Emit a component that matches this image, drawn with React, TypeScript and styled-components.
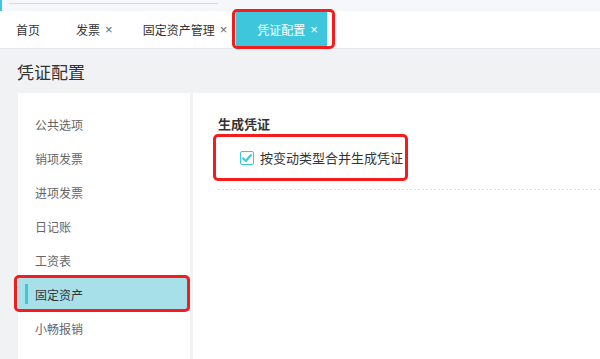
import * as React from 'react';
import styled, { createGlobalStyle } from 'styled-components';

const GlobalStyle = createGlobalStyle`
    html, body {
        margin: 0;
        padding: 0;
        background: #f1f2f4;
        font-family: 'Noto Sans CJK SC', 'Liberation Sans', sans-serif;
        overflow: hidden;
    }
`;

const tabs = [
    { label: '首页', closable: false },
    { label: '发票', closable: true },
    { label: '固定资产管理', closable: true },
    { label: '凭证配置', closable: true, active: true },
];

const menu = ['公共选项', '销项发票', '进项发票', '日记账', '工资表', '固定资产', '小畅报销'];

export default function App() {
    const [activeMenu, setActiveMenu] = React.useState('固定资产');
    const [merge, setMerge] = React.useState(true);

    return (
        <Page>
            <GlobalStyle />
            <TopStrip>
                <StripLine />
            </TopStrip>
            <TabBar>
                {tabs.map(t => {
                    const tab = (
                        <Tab key={t.label} $active={!!t.active} $first={!t.closable}>
                            {t.label}
                            {t.closable && <Close $active={!!t.active}>×</Close>}
                        </Tab>
                    );
                    return t.active ? (
                        <Marked key={t.label} $t={3} $r={8} $b={1} $l={4}>
                            {tab}
                        </Marked>
                    ) : (
                        tab
                    );
                })}
            </TabBar>
            <Title>凭证配置</Title>
            <Main>
                <Sidebar>
                    {menu.map(m =>
                        m === activeMenu ? (
                            <Marked key={m} $t={2} $r={0} $b={1} $l={4}>
                                <MenuItem $active onClick={() => setActiveMenu(m)}>
                                    <ActiveBar />
                                    {m}
                                </MenuItem>
                            </Marked>
                        ) : (
                            <MenuItem key={m} onClick={() => setActiveMenu(m)}>
                                {m}
                            </MenuItem>
                        ),
                    )}
                </Sidebar>
                <Content>
                    <SectionTitle>生成凭证</SectionTitle>
                    <OptionRow>
                        <Marked $t={7} $r={5} $b={7} $l={5}>
                            <Option onClick={() => setMerge(!merge)}>
                                <Checkbox $checked={merge}>
                                    {merge && (
                                        <svg width="12" height="12" viewBox="0 0 12 12">
                                            <path
                                                d="M2 6.2 L4.8 9 L10 3"
                                                fill="none"
                                                stroke="#3ec7dc"
                                                strokeWidth="2"
                                                strokeLinecap="round"
                                                strokeLinejoin="round"
                                            />
                                        </svg>
                                    )}
                                </Checkbox>
                                按变动类型合并生成凭证
                            </Option>
                        </Marked>
                    </OptionRow>
                    <Divider />
                </Content>
            </Main>
        </Page>
    );
}

const Page = styled.div`
    width: 600px;
    height: 359px;
    display: flex;
    flex-direction: column;
    background: #f1f2f4;
`;

const TopStrip = styled.div`
    height: 11px;
    background: #f6f7fb;
    border-left: 2px solid #3ec7dc;
    box-sizing: border-box;
    padding: 3px 0 0 7px;
`;

const StripLine = styled.div`
    width: 209px;
    height: 1px;
    background: #d6d9de;
`;

const TabBar = styled.div`
    height: 38px;
    background: #fff;
    border-bottom: 1px solid #e4e6ea;
    display: flex;
    align-items: stretch;
    padding-top: 1px;
    box-sizing: border-box;
`;

const Tab = styled.div<{ $active: boolean; $first: boolean }>`
    display: flex;
    align-items: center;
    height: 35px;
    padding: ${p => (p.$first ? '0 15px 0 16px' : '0 9px 0 21px')};
    font-size: 12px;
    color: ${p => (p.$active ? '#fff' : '#333')};
    background: ${p => (p.$active ? '#3ec7dc' : 'transparent')};
    cursor: pointer;
    white-space: nowrap;
`;

const Close = styled.span<{ $active: boolean }>`
    margin-left: 5px;
    font-size: 13px;
    line-height: 1;
    color: ${p => (p.$active ? '#fff' : '#666')};
    font-family: 'Liberation Sans', sans-serif;
`;

const Marked = styled.div<{ $t: number; $r: number; $b: number; $l: number }>`
    position: relative;
    display: flex;
    &::after {
        content: '';
        position: absolute;
        top: -${p => p.$t}px;
        right: -${p => p.$r}px;
        bottom: -${p => p.$b}px;
        left: -${p => p.$l}px;
        border: 3px solid #f41c1c;
        border-radius: 5px;
        pointer-events: none;
    }
`;

const Title = styled.div`
    height: 44px;
    display: flex;
    align-items: center;
    padding-left: 17px;
    font-size: 17px;
    color: #333;
`;

const Main = styled.div`
    flex: 1;
    display: flex;
    gap: 3px;
    padding-left: 18px;
    min-height: 0;
`;

const Sidebar = styled.div`
    width: 172px;
    background: #fff;
    padding-top: 14px;
    display: flex;
    flex-direction: column;
    & > div {
        width: 100%;
    }
`;

const MenuItem = styled.div<{ $active?: boolean }>`
    position: relative;
    height: 34px;
    width: 100%;
    display: flex;
    align-items: center;
    padding-left: 17px;
    box-sizing: border-box;
    font-size: 12px;
    color: ${p => (p.$active ? '#333' : '#666')};
    background: ${p => (p.$active ? '#a8e0ea' : 'transparent')};
    cursor: pointer;
`;

const ActiveBar = styled.span`
    position: absolute;
    left: 7px;
    top: 7px;
    width: 3px;
    height: 20px;
    background: #3ec7dc;
`;

const Content = styled.div`
    flex: 1;
    background: #fff;
    padding: 22px 0 0 25px;
`;

const SectionTitle = styled.div`
    font-size: 13px;
    font-weight: bold;
    color: #333;
    line-height: 18px;
`;

const OptionRow = styled.div`
    display: flex;
    margin-top: 8px;
`;

const Option = styled.label`
    display: flex;
    align-items: center;
    height: 33px;
    padding-left: 22px;
    font-size: 13px;
    color: #333;
    cursor: pointer;
`;

const Checkbox = styled.span<{ $checked: boolean }>`
    width: 14px;
    height: 14px;
    box-sizing: border-box;
    border: 1px solid ${p => (p.$checked ? '#3ec7dc' : '#ccc')};
    border-radius: 2px;
    margin-right: 6px;
    display: flex;
    align-items: center;
    justify-content: center;
    background: #fff;
`;

const Divider = styled.div`
    margin-top: 15px;
    height: 1px;
    background-image: linear-gradient(to right, #dedede 50%, transparent 50%);
    background-size: 4px 1px;
`;
